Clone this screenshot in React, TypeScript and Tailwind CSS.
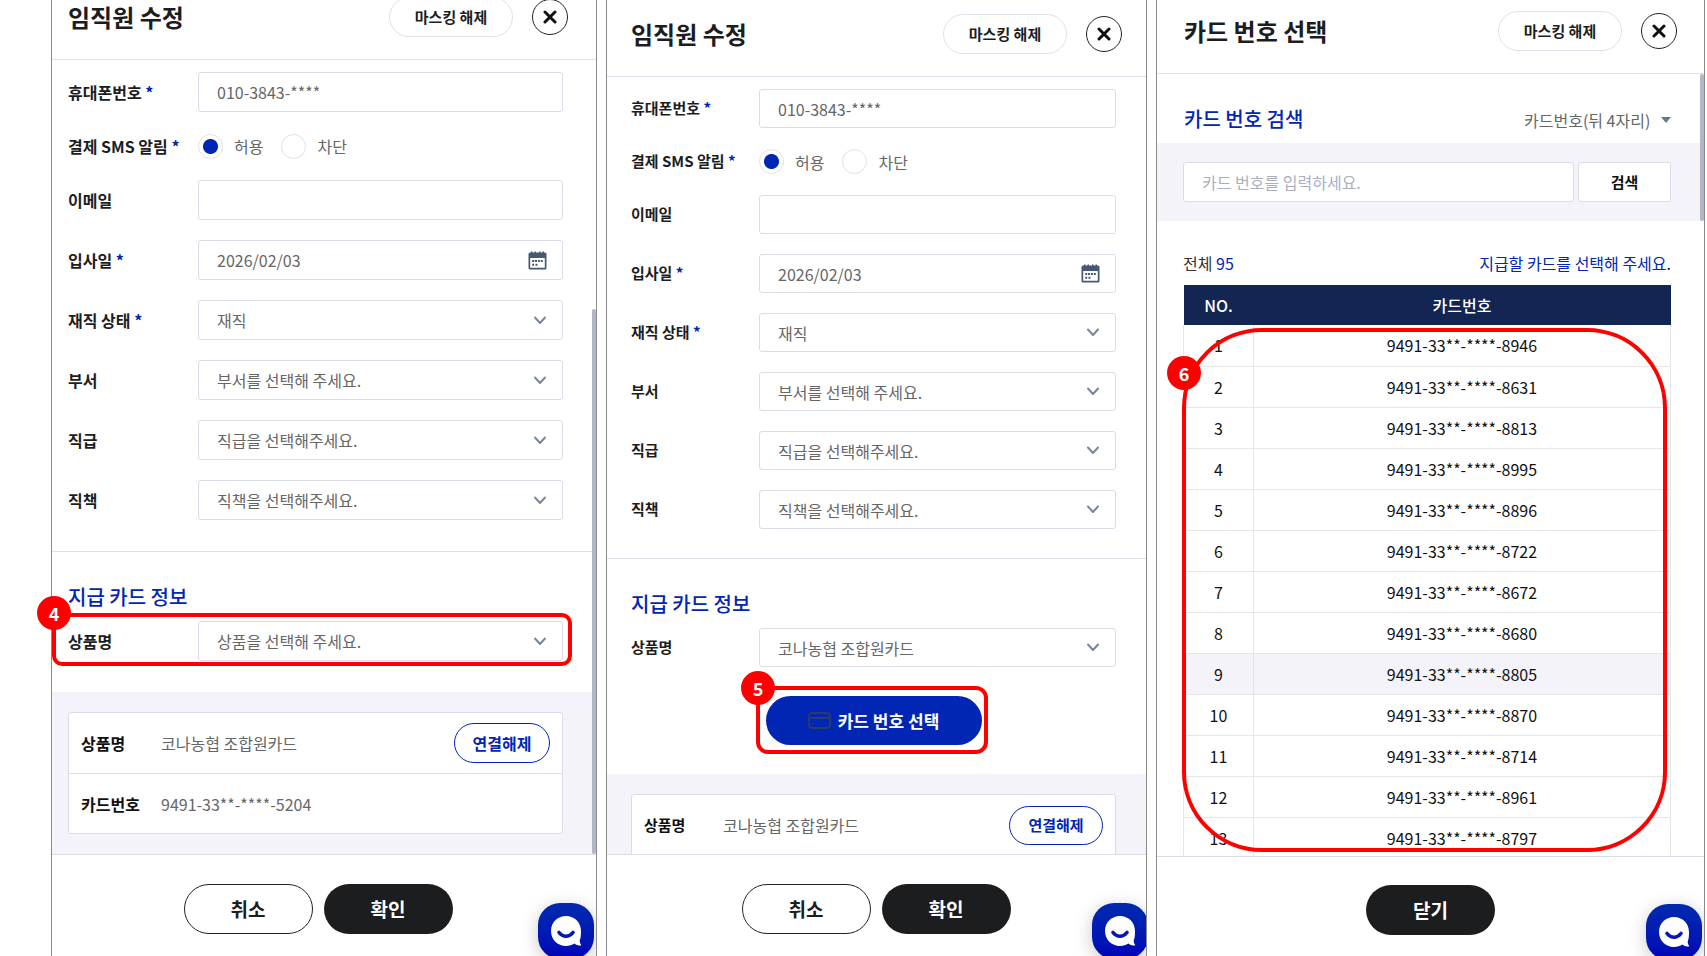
import type { ReactNode } from 'react';

const fontStack = "font-['Noto_Sans_CJK_KR','Noto_Sans',sans-serif]";

const cards = [
  '8946', '8631', '8813', '8995', '8896', '8722', '8672',
  '8680', '8805', '8870', '8714', '8961', '8797',
].map((tail, i) => ({ no: i + 1, number: `9491-33**-****-${tail}` }));

function CloseIcon() {
  return (
    <svg viewBox="0 0 14 14" className="size-3.5" fill="none" stroke="#111" strokeWidth="3" strokeLinecap="round">
      <path d="M2 2l10 10M12 2L2 12" />
    </svg>
  );
}

function Chevron() {
  return (
    <svg viewBox="0 0 14 9" className="h-[9px] w-3.5" fill="none" stroke="#7a879b" strokeWidth="2" strokeLinecap="round" strokeLinejoin="round">
      <path d="M2 1.500L7 7l5-5.500" />
    </svg>
  );
}

function CalendarIcon() {
  return (
    <svg viewBox="0 0 19 19" className="size-[19px]" fill="#475872">
      <path d="M2 1.500h1V.5h1.500v1h2V.5H8v1h3V.5h1.500v1h2V.5H16v1h1a1.500 1.500 0 0 1 1.500 1.500v14A1.500 1.500 0 0 1 17 18.500H2A1.500 1.500 0 0 1 .5 17V3A1.500 1.500 0 0 1 2 1.500zM2.200 7v9.800h14.600V7z" fillRule="evenodd" />
      <path d="M4.200 9h2v2h-2zM7 9h2v2H7zM9.900 9h2v2h-2zM12.800 9h2v2h-2zM4.200 12.800h2v2h-2zM7.500 12.800h2v2h-2z" />
    </svg>
  );
}

function CardIcon() {
  return (
    <svg viewBox="0 0 23 17" className="h-[17px] w-[23px]" fill="none" stroke="#2b3c66" strokeWidth="1.800">
      <rect x="1" y="1" width="21" height="15" rx="3" />
      <path d="M1 6h21M4 11.800h2" />
    </svg>
  );
}

function ChatButton({ place }: { place: string }) {
  return (
    <button
      type="button"
      aria-label="채팅 상담"
      className={`absolute flex size-[56px] items-center justify-center rounded-[22px] bg-linear-to-b from-[#0229ae] to-[#0000b8] shadow-[0_4px_18px_rgba(0,0,0,0.22)] ${place}`}
    >
      <svg viewBox="0 0 32 32" className="size-8">
        <path d="M16 1C7.500 1 1 7.500 1 16s6.500 15 15 15c3.300 0 6-.9 8.500-2.500 1.500 1.500 3.500 2 6 2 .6 0 .8-.6.4-1-1-1.200-1.200-2.500-1.100-4.500C31 22.500 31 19 31 16 31 7.500 24.500 1 16 1z" fill="#fff" />
        <path d="M9 17.500c4 5 10 5 14 0" fill="none" stroke="#0717b2" strokeWidth="3.600" strokeLinecap="round" />
      </svg>
    </button>
  );
}

function Header({ title, className }: { title: string; className: string }) {
  return (
    <header className={`flex shrink-0 items-center border-b border-[#dfe1ea] ${className}`}>
      <h1 className="flex-1 text-2xl font-bold text-[#1c1d1f]">{title}</h1>
      <button type="button" className="h-10 w-[124px] rounded-full border border-[#dfe1ea] text-[15px] font-bold text-[#1c1d1f]">
        마스킹 해제
      </button>
      <button type="button" aria-label="닫기" className="ml-[19px] flex size-9 items-center justify-center rounded-full border border-[#222]">
        <CloseIcon />
      </button>
    </header>
  );
}

function Annotation({ no, box, badge }: { no: number; box: string; badge: string }) {
  return (
    <div className={`pointer-events-none absolute border-4 border-[#ff0000] ${box}`}>
      <span className={`absolute flex size-[34px] items-center justify-center rounded-full bg-[#ff0000] text-lg leading-none font-bold text-white ${badge}`}>
        {no}
      </span>
    </div>
  );
}

const boxClass = 'w-full rounded-[3px] border border-[#dadde8] bg-white pl-[18px] text-base text-[#666]';

function Field({ label, id, required, compact, children }: { label: string; id?: string; required?: boolean; compact: boolean; children: ReactNode }) {
  const text = (
    <>
      {label}
      {required && <span className="text-[#0026b3]"> *</span>}
    </>
  );
  const cls = `shrink-0 font-bold text-[#1c1d1f] ${compact ? 'w-32 text-[15px]' : 'w-[130px] text-base'}`;
  return (
    <div className="flex items-center">
      {id ? <label htmlFor={id} className={cls}>{text}</label> : <span className={cls}>{text}</span>}
      <div className="relative min-w-0 flex-1">{children}</div>
    </div>
  );
}

function SelectBox({ id, value, compact }: { id: string; value: string; compact: boolean }) {
  return (
    <>
      <select id={id} defaultValue={value} className={`block appearance-none ${boxClass} ${compact ? 'h-[39px]' : 'h-10'}`}>
        <option>{value}</option>
      </select>
      <span className="pointer-events-none absolute inset-y-0 right-4 flex items-center">
        <Chevron />
      </span>
    </>
  );
}

function Radio({ name, label, checked }: { name: string; label: string; checked?: boolean }) {
  return (
    <label className="flex items-center gap-[11px] text-base text-[#666]">
      <input
        type="radio"
        name={name}
        defaultChecked={checked}
        className="size-[25px] appearance-none rounded-full border border-[#dfe1ea] bg-white checked:bg-[radial-gradient(circle,#0026b3_7px,#fff_8px)]"
      />
      {label}
    </label>
  );
}

type EmployeeProps = {
  prefix: string;
  compact?: boolean;
  product: string;
  action?: ReactNode;
  headerClass: string;
  padding: string;
  footerClass: string;
  chat: string;
  scrollbar?: boolean;
  showNumber?: boolean;
  children: ReactNode;
};

function EmployeePanel({ prefix, compact = false, product, action, headerClass, padding, footerClass, chat, scrollbar, showNumber, children }: EmployeeProps) {
  const h = compact ? 'h-[39px]' : 'h-10';
  const selects = [
    { key: 'status', label: '재직 상태', value: '재직', required: true },
    { key: 'dept', label: '부서', value: '부서를 선택해 주세요.' },
    { key: 'rank', label: '직급', value: '직급을 선택해주세요.' },
    { key: 'duty', label: '직책', value: '직책을 선택해주세요.' },
  ];
  return (
    <section className="relative flex h-screen min-w-0 flex-col border-x border-[#8a8a8a] bg-white">
      <Header title="임직원 수정" className={headerClass} />
      <div className="relative min-h-0 flex-1 overflow-hidden">
        <div className={`flex flex-col gap-5 border-b border-[#dfe1ea] pt-3 ${padding} ${compact ? 'pb-[29px]' : 'pb-[31px]'}`}>
          <Field label="휴대폰번호" id={`${prefix}-phone`} required compact={compact}>
            <input id={`${prefix}-phone`} defaultValue="010-3843-****" className={`block ${boxClass} ${h}`} />
          </Field>
          <Field label="결제 SMS 알림" required compact={compact}>
            <div className={`flex items-center gap-[18px] ${compact ? 'h-[27px]' : 'h-7'}`}>
              <Radio name={`${prefix}-sms`} label="허용" checked />
              <Radio name={`${prefix}-sms`} label="차단" />
            </div>
          </Field>
          <Field label="이메일" id={`${prefix}-email`} compact={compact}>
            <input id={`${prefix}-email`} type="email" className={`block ${boxClass} ${h}`} />
          </Field>
          <Field label="입사일" id={`${prefix}-joined`} required compact={compact}>
            <input id={`${prefix}-joined`} defaultValue="2026/02/03" className={`block ${boxClass} ${h}`} />
            <button type="button" aria-label="날짜 선택" className="absolute inset-y-0 right-4 flex items-center">
              <CalendarIcon />
            </button>
          </Field>
          {selects.map((s) => (
            <Field key={s.key} label={s.label} id={`${prefix}-${s.key}`} required={s.required} compact={compact}>
              <SelectBox id={`${prefix}-${s.key}`} value={s.value} compact={compact} />
            </Field>
          ))}
        </div>
        <div className={`pt-[33px] ${padding} ${compact ? 'pb-[29px]' : 'pb-[31px]'}`}>
          <h2 className="mb-3 text-xl leading-6 font-medium text-[#0026b3]">지급 카드 정보</h2>
          <Field label="상품명" id={`${prefix}-product`} compact={compact}>
            <SelectBox id={`${prefix}-product`} value={product} compact={compact} />
          </Field>
          {action}
        </div>
        <div className={`bg-[#f3f3f9] py-5 ${padding}`}>
          <dl className="rounded-[3px] border border-[#dadde8] bg-white text-base">
            <div className="flex h-[60px] items-center px-3">
              <dt className={`shrink-0 font-bold text-[#111] ${compact ? 'w-[79px] text-[15px]' : 'w-20'}`}>상품명</dt>
              <dd className="flex flex-1 items-center justify-between text-[#666]">
                코나농협 조합원카드
                <button type="button" className={`rounded-full border border-[#0026b3] font-bold text-[#0026b3] ${compact ? 'h-[39px] w-[94px] text-[15px]' : 'h-10 w-24'}`}>
                  연결해제
                </button>
              </dd>
            </div>
            {showNumber && (
              <div className="flex h-[60px] items-center border-t border-[#dadde8] px-3">
                <dt className="w-20 shrink-0 font-bold text-[#111]">카드번호</dt>
                <dd className="text-[#666]">9491-33**-****-5204</dd>
              </div>
            )}
          </dl>
        </div>
      </div>
      {scrollbar && <div className="absolute top-[309px] right-0 bottom-[102px] w-1 rounded-full bg-[#b1b7c5]" />}
      <footer className={`relative flex h-[102px] shrink-0 justify-center gap-[11px] overflow-hidden border-t border-[#dadde8] pt-[29px] ${footerClass}`}>
        <button type="button" className="h-[50px] w-[129px] rounded-full border border-[#222] text-[19px] font-bold text-[#1c1d1f]">취소</button>
        <button type="button" className="h-[50px] w-[129px] rounded-full bg-[#1c1d1f] text-[19px] font-bold text-white">확인</button>
        <ChatButton place={chat} />
      </footer>
      {children}
    </section>
  );
}

function CardPanel() {
  return (
    <section className="relative flex h-screen min-w-0 flex-col border-x border-[#8a8a8a] bg-white">
      <Header title="카드 번호 선택" className="h-[74px] pr-[27px] pb-[11px] pl-[27px]" />
      <div className="relative min-h-0 flex-1 overflow-hidden">
        <div className="flex h-[69px] justify-between pt-[33px] pr-[33px] pl-[27px]">
          <h2 className="text-xl leading-6 font-medium text-[#0026b3]">카드 번호 검색</h2>
          <div className="relative">
            <select aria-label="검색 조건" defaultValue="카드번호(뒤 4자리)" className="block h-[26px] appearance-none bg-white pr-5 text-base text-[#666]">
              <option>카드번호(뒤 4자리)</option>
            </select>
            <svg viewBox="0 0 10 6" className="pointer-events-none absolute top-2.5 right-0 h-1.5 w-2.5" fill="#66788f">
              <path d="M0 0h10L5 6z" />
            </svg>
          </div>
        </div>
        <form className="flex gap-1 bg-[#f3f3f9] py-[19px] pr-[33px] pl-[26px]" onSubmit={(e) => e.preventDefault()}>
          <input
            aria-label="카드 번호"
            placeholder="카드 번호를 입력하세요."
            className="h-10 min-w-0 flex-1 rounded-[3px] border border-[#dadde8] bg-white pl-[18px] text-base placeholder:text-[#a9afbf]"
          />
          <button type="submit" className="h-10 w-[93px] rounded-[3px] border border-[#dadde8] bg-white text-[15px] font-bold text-[#111]">검색</button>
        </form>
        <div className="pt-[30px] pr-[33px] pl-[26px]">
          <div className="mb-2.5 flex justify-between text-base leading-6 text-[#333]">
            <p>전체 <span className="text-[#0026b3]">95</span></p>
            <p className="text-[#0026b3]">지급할 카드를 선택해 주세요.</p>
          </div>
          <table className="w-full table-fixed border-collapse text-center text-base text-[#111]">
            <thead>
              <tr className="h-10 bg-[#122553] text-white">
                <th className="w-[70px] font-medium">NO.</th>
                <th className="font-medium">카드번호</th>
              </tr>
            </thead>
            <tbody>
              {cards.map((c) => (
                <tr key={c.no} className={c.no === 9 ? 'h-[41px] bg-[#f3f3f9]' : 'h-[41px]'}>
                  <td className="border border-t-0 border-[#e6e6e8]">{c.no}</td>
                  <td className="border border-t-0 border-[#e6e6e8]">{c.number}</td>
                </tr>
              ))}
            </tbody>
          </table>
        </div>
        <div className="absolute top-0 right-0 h-[147px] w-1 rounded-full bg-[#b1b7c5]" />
      </div>
      <footer className="relative flex h-[100px] shrink-0 justify-center overflow-hidden border-t border-[#dadde8] pt-7">
        <button type="button" className="h-[50px] w-[129px] rounded-full bg-[#1c1d1f] text-[19px] font-bold text-white">닫기</button>
        <ChatButton place="top-[47px] right-[2px]" />
      </footer>
      <Annotation no={6} box="top-[328px] right-[37px] bottom-[104px] left-[25px] rounded-[80px]" badge="top-6 -left-[19px]" />
    </section>
  );
}

export default function App() {
  return (
    <main className={`grid h-screen grid-cols-[546fr_541fr_549fr] gap-[9px] overflow-hidden bg-white pr-[2px] pl-[51px] ${fontStack}`}>
      <EmployeePanel
        prefix="first"
        product="상품을 선택해 주세요."
        headerClass="-mt-[17px] h-[77px] pr-7 pb-2 pl-4"
        padding="pr-[33px] pl-4"
        footerClass="pr-3"
        chat="top-12 right-[2px]"
        scrollbar
        showNumber
      >
        <Annotation no={4} box="top-[613px] right-6 left-0 h-[53px] rounded-[10px]" badge="-top-[21px] -left-[19px]" />
      </EmployeePanel>
      <EmployeePanel
        prefix="second"
        compact
        product="코나농협 조합원카드"
        headerClass="h-[77px] pr-6 pb-2 pl-6"
        padding="pr-[30px] pl-6"
        footerClass="pr-px"
        chat="top-12 -right-0.5"
        action={
          <div className="mt-[29px] flex justify-center">
            <button type="button" className="flex h-[49px] w-[216px] items-center justify-center gap-[7px] rounded-full bg-[#0026b3] text-[17px] font-bold text-white">
              <CardIcon />
              카드 번호 선택
            </button>
          </div>
        }
      >
        <Annotation no={5} box="top-[686px] right-[158px] left-[149px] h-[68px] rounded-xl" badge="-top-[19px] -left-[19px]" />
      </EmployeePanel>
      <CardPanel />
    </main>
  );
}
